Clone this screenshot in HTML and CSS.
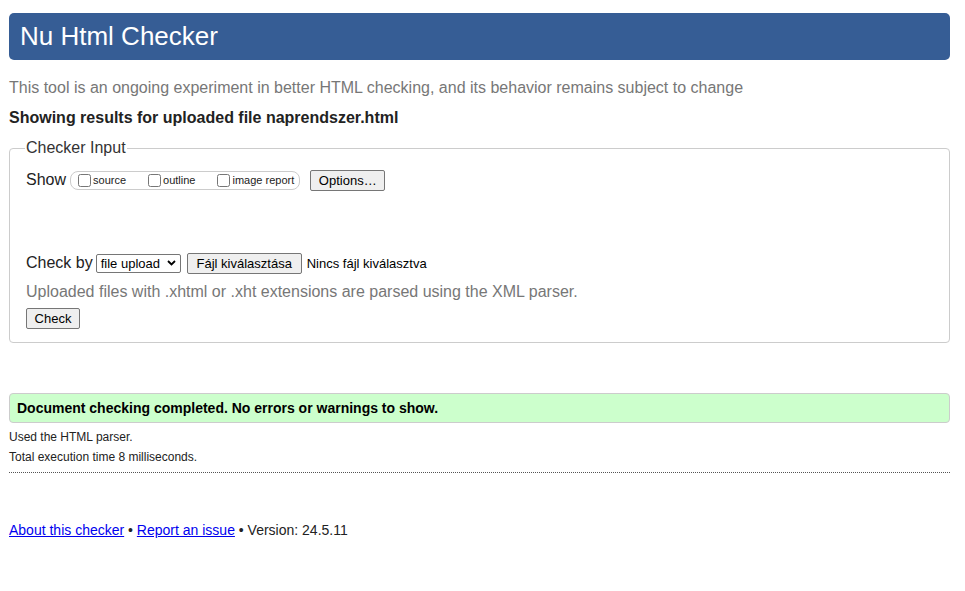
FILE: index.html
```html
<!DOCTYPE html>
<html lang="en">
<head>
<meta charset="utf-8">
<title>Nu Html Checker</title>
<link rel="stylesheet" href="styles.css">
</head>
<body>
<h1 class="title">Nu Html Checker</h1>
<p class="intro">This tool is an ongoing experiment in better HTML checking, and its behavior remains subject to change</p>
<p class="showing">Showing results for uploaded file naprendszer.html</p>
<fieldset class="input">
  <legend>Checker Input</legend>
  <div class="row show-row">
    <span class="label">Show</span>
    <span class="group">
      <label class="opt"><input type="checkbox">source</label>
      <label class="opt"><input type="checkbox">outline</label>
      <label class="opt"><input type="checkbox">image report</label>
    </span>
    <button class="btn btn-options" type="button">Options…</button>
  </div>
  <div class="spacer"></div>
  <div class="row check-row">
    <span class="label">Check by</span>
    <span class="select">file upload<svg width="9" height="6" viewBox="0 0 9 6"><path d="M1 1l3.5 3.5L8 1" fill="none" stroke="#000" stroke-width="1.8"/></svg></span>
    <button class="btn btn-file" type="button">Fájl kiválasztása</button>
    <span class="nofile">Nincs fájl kiválasztva</span>
  </div>
  <p class="hint">Uploaded files with .xhtml or .xht extensions are parsed using the XML parser.</p>
  <button class="btn btn-check" type="button">Check</button>
</fieldset>
<p class="success">Document checking completed. No errors or warnings to show.</p>
<p class="details first">Used the HTML parser.</p>
<p class="details">Total execution time 8 milliseconds.</p>
<hr class="sep">
<p class="footer"><a href="#">About this checker</a> • <a href="#">Report an issue</a> • Version: 24.5.11</p>
</body>
</html>
```
FILE: styles.css
```css
html, body {
  margin: 0;
  background: #fff;
}
body {
  padding: 13px 15px 0 9px;
  font-family: "Liberation Sans", Arial, sans-serif;
  color: #222;
}
.title {
  margin: 0;
  height: 47px;
  line-height: 47px;
  padding: 0 11px;
  background: #365d95;
  color: #fff;
  font-size: 26px;
  font-weight: normal;
  border-radius: 5px;
}
.intro {
  margin: 19px 0 0;
  font-size: 16px;
  line-height: 18px;
  color: #777;
}
.showing {
  margin: 12px 0 0;
  font-size: 16px;
  line-height: 18px;
  font-weight: bold;
  color: #222;
}
.input {
  margin: 12px 0 0;
  padding: 13px 16px 13px 16px;
  border: 1px solid #ccc;
  border-radius: 4px;
  min-width: 0;
}
.input legend {
  padding: 0 1px;
  margin-left: -1px;
  font-size: 16px;
  line-height: 18px;
  color: #333;
}
.row {
  display: flex;
  align-items: center;
}
.label {
  font-size: 16px;
  line-height: 20px;
  color: #222;
}
.show-row {
  height: 20px;
}
.group {
  display: flex;
  align-items: center;
  margin-left: 4px;
  height: 17px;
  padding: 0 5px 0 5px;
  border: 1px solid #ccc;
  border-radius: 8px;
}
.opt {
  display: flex;
  align-items: center;
  font-size: 11px;
  color: #222;
  margin-right: 20px;
}
.opt:last-child { margin-right: 0; }
.opt input {
  margin: 0 2px 0 2px;
  width: 13px;
  height: 13px;
}
.btn {
  font-family: "Liberation Sans", Arial, sans-serif;
  font-size: 13px;
  color: #000;
  background: #efefef;
  border: 1px solid #767676;
  border-radius: 2px;
  padding: 0 6px;
  height: 21px;
  line-height: 19px;
}
.btn-options {
  margin-left: 10px;
  width: 75px;
  padding: 0;
}
.spacer {
  height: 63px;
}
.check-row {
  height: 20px;
}
.select {
  display: inline-flex;
  align-items: center;
  justify-content: space-between;
  box-sizing: border-box;
  margin-left: 3px;
  width: 85px;
  height: 19px;
  padding: 0 4px 0 4px;
  border: 1px solid #767676;
  border-radius: 2px;
  font-size: 13px;
  color: #000;
  background: #fff;
}
.btn-file {
  margin-left: 6px;
  width: 115px;
  padding: 0;
}
.nofile {
  margin-left: 5px;
  font-size: 13px;
  color: #000;
}
.hint {
  margin: 10px 0 0;
  font-size: 16px;
  line-height: 18px;
  color: #777;
}
.btn-check {
  display: block;
  margin-top: 7px;
  width: 54px;
  padding: 0;
}
.success {
  margin: 50px 0 0;
  padding: 0 7px;
  height: 28px;
  line-height: 28px;
  background: #ccffcc;
  border: 1px solid #ccc;
  border-radius: 4px;
  font-size: 14px;
  font-weight: bold;
  color: #000;
}
.details {
  margin: 6px 0 0;
  font-size: 12px;
  line-height: 14px;
  color: #222;
}
.details.first {
  margin-top: 7px;
}
.sep {
  margin: 8px 0 0;
  border: 0;
  border-top: 1px dotted #555;
  height: 0;
}
.footer {
  margin: 49px 0 0;
  font-size: 14px;
  line-height: 16px;
  color: #222;
}
.footer a {
  color: #00e;
}
```
